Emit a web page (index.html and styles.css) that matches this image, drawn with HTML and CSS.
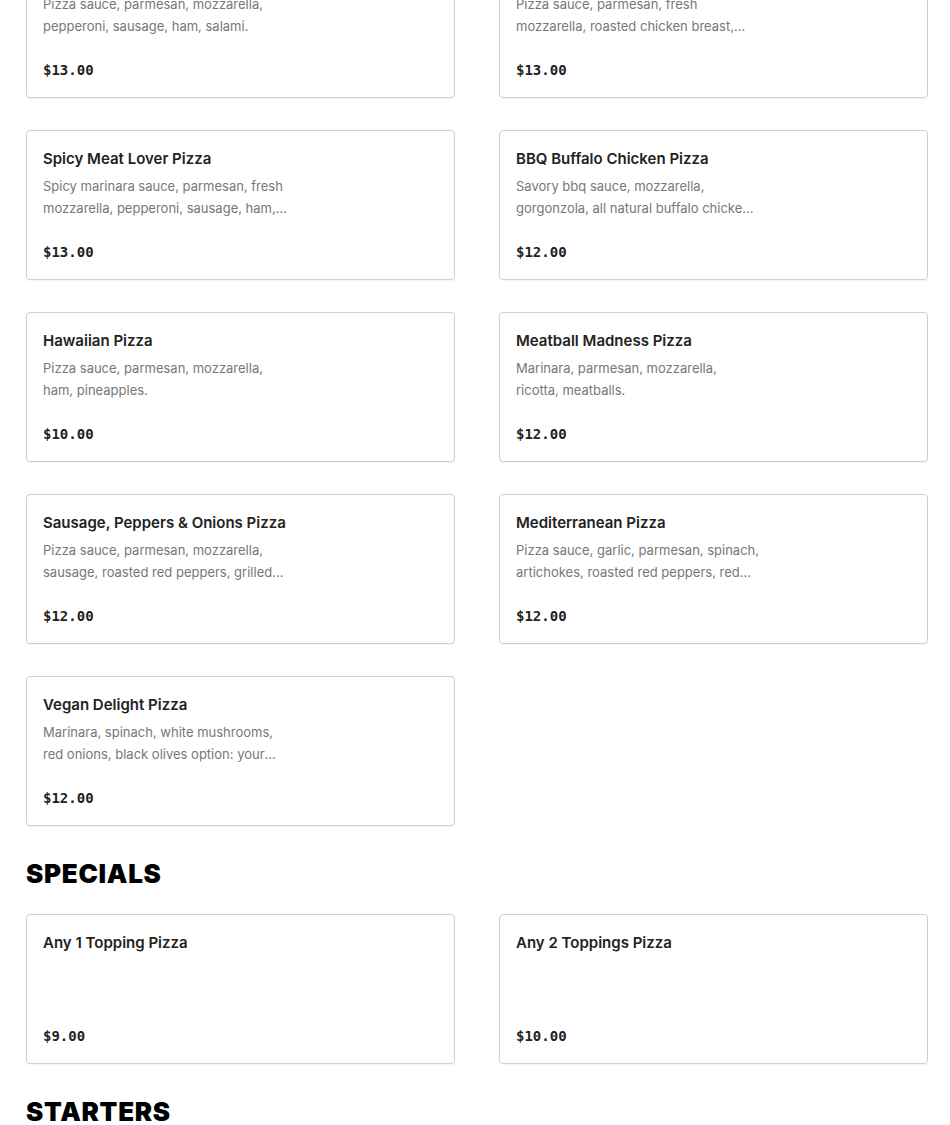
FILE: index.html
```html
<!DOCTYPE html>
<html lang="en">
<head>
    <meta charset="UTF-8">
    <meta name="viewport" content="width=device-width, initial-scale=1.0">
    <title>Menu</title>
    <link rel="stylesheet" href="styles.css">
</head>
<body>
    <div class="menu">
        <div class="item-grid first">
            <div class="item">
                <h3>Meat Lover Pizza</h3>
                <p class="desc">Pizza sauce, parmesan, mozzarella, pepperoni, sausage, ham, salami.</p>
                <div class="price">$13.00</div>
            </div>
            <div class="item">
                <h3>Chicken Fresca Pizza</h3>
                <p class="desc">Pizza sauce, parmesan, fresh mozzarella, roasted chicken breast, tomatoes, basil.</p>
                <div class="price">$13.00</div>
            </div>
            <div class="item">
                <h3>Spicy Meat Lover Pizza</h3>
                <p class="desc">Spicy marinara sauce, parmesan, fresh mozzarella, pepperoni, sausage, ham, salami, jalapenos.</p>
                <div class="price">$13.00</div>
            </div>
            <div class="item">
                <h3>BBQ Buffalo Chicken Pizza</h3>
                <p class="desc">Savory bbq sauce, mozzarella, gorgonzola, all natural buffalo chicken, red onions.</p>
                <div class="price">$12.00</div>
            </div>
            <div class="item">
                <h3>Hawaiian Pizza</h3>
                <p class="desc">Pizza sauce, parmesan, mozzarella, ham, pineapples.</p>
                <div class="price">$10.00</div>
            </div>
            <div class="item">
                <h3>Meatball Madness Pizza</h3>
                <p class="desc">Marinara, parmesan, mozzarella, ricotta, meatballs.</p>
                <div class="price">$12.00</div>
            </div>
            <div class="item">
                <h3>Sausage, Peppers &amp; Onions Pizza</h3>
                <p class="desc">Pizza sauce, parmesan, mozzarella, sausage, roasted red peppers, grilled onions.</p>
                <div class="price">$12.00</div>
            </div>
            <div class="item">
                <h3>Mediterranean Pizza</h3>
                <p class="desc">Pizza sauce, garlic, parmesan, spinach, artichokes, roasted red peppers, red onions, feta.</p>
                <div class="price">$12.00</div>
            </div>
            <div class="item">
                <h3>Vegan Delight Pizza</h3>
                <p class="desc">Marinara, spinach, white mushrooms, red onions, black olives option: your choice of vegan cheese.</p>
                <div class="price">$12.00</div>
            </div>
        </div>

        <h2 class="section-title">SPECIALS</h2>
        <div class="item-grid">
            <div class="item">
                <h3>Any 1 Topping Pizza</h3>
                <p class="desc"></p>
                <div class="price">$9.00</div>
            </div>
            <div class="item">
                <h3>Any 2 Toppings Pizza</h3>
                <p class="desc"></p>
                <div class="price">$10.00</div>
            </div>
        </div>

        <h2 class="section-title">STARTERS</h2>
    </div>
</body>
</html>
```

FILE: styles.css
```css
* {
    margin: 0;
    padding: 0;
    box-sizing: border-box;
}

body {
    font-family: Inter, 'Noto Sans', sans-serif;
    background: #fff;
    color: #222;
}

.menu {
    padding: 0 22px 0 26px;
}

.item-grid {
    display: grid;
    grid-template-columns: 1fr 1fr;
    column-gap: 44px;
    row-gap: 32px;
}

.item-grid.first {
    margin-top: -52px;
}

.item {
    border: 1px solid #cfcfcf;
    border-radius: 4px;
    padding: 17px 16px 16px;
    height: 150px;
    box-shadow: 0 1px 1px rgba(0,0,0,0.05);
}

.item h3 {
    font-size: 15px;
    font-weight: 600;
    line-height: 22px;
    color: #222;
    margin-bottom: 5px;
}

.desc {
    font-size: 13px;
    line-height: 22px;
    color: #777;
    max-width: 245px;
    height: 44px;
    overflow: hidden;
    display: -webkit-box;
    -webkit-line-clamp: 2;
    -webkit-box-orient: vertical;
    margin-bottom: 22px;
}

.price {
    font-family: 'DejaVu Sans Mono', 'Liberation Mono', monospace;
    font-size: 14px;
    font-weight: bold;
    line-height: 22px;
    color: #222;
}

.section-title {
    font-family: Inter, 'Noto Sans', sans-serif;
    font-weight: 900;
    font-size: 26px;
    letter-spacing: 0.7px;
    line-height: 34px;
    color: #000;
    margin: 31px 0 23px;
}
```
